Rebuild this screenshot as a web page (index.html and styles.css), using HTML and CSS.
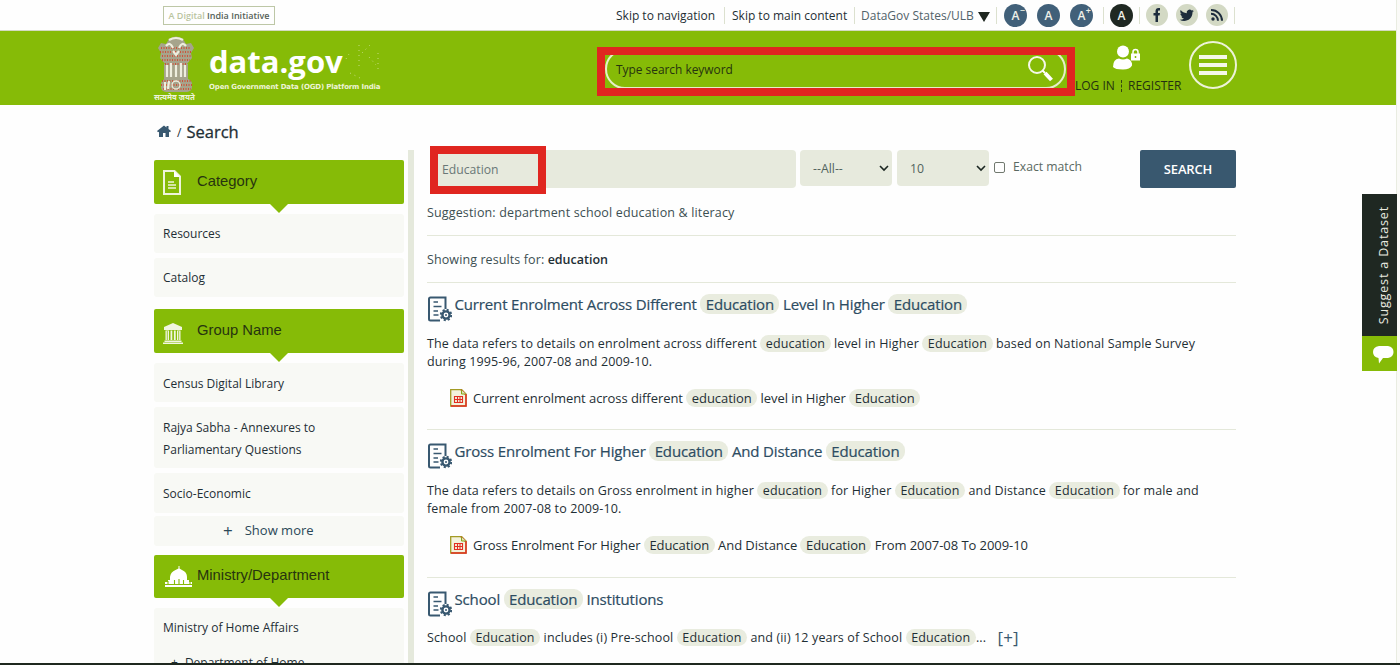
FILE: index.html
```html
<!DOCTYPE html>
<html lang="en">
<head>
<meta charset="utf-8">
<title>Search | data.gov</title>
<link rel="stylesheet" href="styles.css">
</head>
<body>
<svg class="defs" width="0" height="0">
  <symbol id="doc" viewBox="0 0 24 26"><path d="M17.500 13V1.500H2.500Q1 1.500 1 3v20q0 1.500 1.500 1.500H12" fill="none" stroke="#385870" stroke-width="2"/><path d="M5.500 6H10M5.500 10.500h8M5.500 15H10M5.500 19h5" stroke="#385870" stroke-width="1.700"/><circle cx="18" cy="19" r="3.600" fill="#fff" stroke="#385870" stroke-width="2.400"/><circle cx="18" cy="19" r="5.200" fill="none" stroke="#385870" stroke-width="2" stroke-dasharray="2.100 1.984"/><circle cx="18" cy="19" r="1" fill="#385870"/></symbol>
  <symbol id="xls" viewBox="0 0 17 18"><path d="M.7.7h11L16 5v12H.7z" fill="#f3f2dc" stroke="#a39b25" stroke-width="1.300"/><path d="M11 1l5 5M16 5v12H1" fill="none" stroke="#e22e22" stroke-width="1.500"/><path d="M11.500 1v4H16" fill="#d9e5b5" stroke="#88a51b"/><path d="M4 7.500h9M4 10.500h9M4 13.500h9M4.500 7v7M7.500 7v7M10 7v7M12.500 7v7" stroke="#e22e22" stroke-width="1.100"/></symbol>
</svg>
<div class="page">
  <div class="topbar">
    <div class="initiative"><span>A Digital</span> India Initiative</div>
    <nav class="toplinks">
      <a class="l1">Skip to navigation</a><i class="sep s1"></i><a class="l2">Skip to main content</a><i class="sep s2"></i><a class="l3">DataGov States/ULB</a><b class="tri"></b><i class="sep s3"></i>
      <span class="dot blue">A<sup>−</sup></span><span class="dot blue">A</span><span class="dot blue">A<sup>+</sup></span><i class="sep s4"></i>
      <span class="dot black">A</span><i class="sep s5"></i>
      <span class="dot soc"><svg width="22" height="22" viewBox="0 0 22 22"><path d="M9.500 18v-6.500H7.500V9h2V7.300C9.500 5.200 10.600 4 12.600 4H14v2.500h-1c-.8 0-1 .4-1 1V9h2l-.4 2.500H12V18z" fill="#1d2c3c"/></svg></span>
      <span class="dot soc"><svg width="22" height="22" viewBox="0 0 24 24"><path d="M19.500 7.500c-.6.300-1.200.4-1.800.5.600-.4 1.100-1 1.400-1.700-.6.400-1.300.6-2 .8A3.200 3.200 0 0 0 11.700 10C9 9.900 6.700 8.600 5.100 6.600c-.9 1.500-.4 3.300 1 4.200-.5 0-1-.2-1.400-.4 0 1.500 1.100 2.800 2.500 3.100-.5.100-1 .1-1.400.1.400 1.200 1.600 2.100 2.900 2.200A6.500 6.500 0 0 1 4 17.100c5.900 3.700 14-.1 14-8.100.6-.4 1.100-.9 1.500-1.500z" fill="#1d2c3c"/></svg></span>
      <span class="dot soc"><svg width="22" height="22" viewBox="0 0 22 22"><circle cx="7" cy="15" r="1.700" fill="#1d2c3c"/><path d="M5 9.800a7 7 0 0 1 7 7M5 6a10.800 10.800 0 0 1 11 10.800" fill="none" stroke="#1d2c3c" stroke-width="2"/></svg></span>
      <i class="sep s6"></i>
    </nav>
  </div>
  <header class="header">
    <div class="emblem">
      <svg width="38" height="58" viewBox="0 0 38 58"><g fill="#a6a48c"><path d="M12 3q7-5 14 0l3 5 5-1 3 5-3 5 1 5-5 6H8l-5-6 1-5-3-5 3-5 5 1z"/><rect x="7" y="28" width="24" height="15"/><rect x="4" y="43" width="31" height="13" rx="5"/></g><g fill="none" stroke="#d93a20" stroke-width="1.500" stroke-dasharray="1 1.500"><path d="M4 12h30M3 16h32M5 20h29M5 24h28M8 28h22M5 45h29M4 49h31M6 53h28"/></g><path d="M12 4q7-4 14 0M9 10q4-5 7 2M22 12q3-7 7-2M16 15l3 4 3-4M10 29v12M14 27v14M19 29v12M24 27v14M28 29v12M8 46v8M12 45l-1 8" stroke="#eeeede" stroke-width="2.200" fill="none"/><circle cx="19" cy="49" r="4" fill="none" stroke="#eeeede" stroke-width="1.300"/></svg>
      <span>सत्यमेव जयते</span>
    </div>
    <div class="brand"><div class="logo">data.gov<svg width="36" height="36" viewBox="0 0 36 36"><path d="M14 1v25M1 15l3-5M17 9l8-8M24 13l7 8M33 9v18M5 29l10 5" fill="none" stroke="#c5dc82" stroke-width="1" stroke-dasharray="1 4"/></svg></div><div class="tag">Open Government Data (OGD) Platform India</div></div>
    <div class="sitesearch"><span>Type search keyword</span>
      <svg width="28" height="28" viewBox="0 0 28 28"><circle cx="10" cy="10" r="8" fill="none" stroke="#f5f8e9" stroke-width="2"/><path d="M15.500 15.500L18 18" stroke="#fff" stroke-width="2"/><path d="M18 18l6.500 7" stroke="#fff" stroke-width="4"/></svg>
      <i class="mark wide"></i></div>
    <div class="account"><svg width="30" height="26" viewBox="0 0 30 26"><circle cx="12" cy="6.500" r="6" fill="#fff"/><path d="M2 22q0-8 6-8.500 4 2 8 0 4 1 5 5v2q-2 4-9 4-8 0-10-2.500z" fill="#fff"/><rect x="20" y="8.500" width="9" height="7" fill="#fff"/><path d="M22 9V7q0-2.500 2.500-2.500T27 7v2" fill="none" stroke="#fff" stroke-width="1.500"/><path d="M24.500 11v2" stroke="#86bb07" stroke-width="1.500"/></svg>
      <div class="login"><span class="li">LOG IN</span><i></i><span class="re">REGISTER</span></div></div>
    <div class="burger"><i></i><i></i><i></i></div>
  </header>
  <div class="crumb"><svg width="14" height="13" viewBox="0 0 14 13"><path d="M7 .5L0 6l1 1.200 1-.5V12h4V8h2.500v4H12V6.700l1 .5L14 6l-2.500-2V1h-2v1.500z" fill="#385870"/></svg><span class="slash">/</span><b>Search</b></div>
  <div class="cols">
    <aside class="side">
      <h3 class="cat"><svg width="18" height="25" viewBox="0 0 18 25"><path d="M1 1h10.500L17 6.500V24H1z" fill="none" stroke="#eef4da" stroke-width="2"/><path d="M11 1v6h6z" fill="#fff"/><path d="M5 12h6M5 15h8M5 18h8" stroke="#eef4da" stroke-width="1.300"/></svg><span>Category</span></h3>
      <ul><li>Resources</li><li>Catalog</li></ul>
      <h3 class="grp"><svg width="20" height="21" viewBox="0 0 20 21"><path d="M10 0L1 4v3h18V4zM2.500 7.500H6V17H2.500zm5 0h1.800V17H7.500zm3.400 0h1.800V17h-1.800zM14 7.500h3.500V17H14zM1.500 17.500h17V19h-17zM0 19.500h20V21H0z" fill="#f1f6e0"/><path d="M4.300 8v9M15.700 8v9" stroke="#86bb07" stroke-width=".8"/></svg><span>Group Name</span></h3>
      <ul class="g2"><li>Census Digital Library</li><li class="two">Rajya Sabha - Annexures to Parliamentary Questions</li><li class="soc-ec">Socio-Economic</li><li class="more"><em>+</em>Show more</li></ul>
      <h3 class="min"><svg width="28" height="22" viewBox="0 0 28 22"><path d="M13.500 0h1v2.500l2.500 1.500q5 2 5 7v3h2v2h3v5H0v-5h3v-2h2v-3q.5-5 5.500-7L13.500 2.500z" fill="#fff"/><path d="M9.500 18v-4M14 18v-5M18.500 18v-4M3 15v3M25 15v3M0 18.500h28" stroke="#86bb07" stroke-width="1.100"/></svg><span>Ministry/Department</span></h3>
      <ul><li class="home">Ministry of Home Affairs<div><em>+</em>Department of Home</div></li></ul>
    </aside>
    <main class="main">
      <div class="form"><div class="field"><span>Education</span><i class="mark small"></i></div>
        <div class="sel"><span>--All--</span><svg width="10" height="7" viewBox="0 0 10 7"><path d="M1 1l4 4 4-4" fill="none" stroke="#1c2722" stroke-width="1.600"/></svg></div>
        <div class="sel"><span>10</span><svg width="10" height="7" viewBox="0 0 10 7"><path d="M1 1l4 4 4-4" fill="none" stroke="#1c2722" stroke-width="1.600"/></svg></div>
        <i class="check"></i><span class="exact">Exact match</span><div class="btn">SEARCH</div></div>
      <div class="sug">Suggestion: department school education &amp; literacy</div>
      <div class="show">Showing results for: <b>education</b></div>
      <article><h2><svg width="24" height="26"><use href="#doc"/></svg><span>Current Enrolment Across Different <mark>Education</mark> Level In Higher <mark>Education</mark></span></h2>
        <p class="p1">The data refers to details on enrolment across different <mark>education</mark> level in Higher <mark>Education</mark> based on National Sample Survey<br>during 1995-96, 2007-08 and 2009-10.</p>
        <div class="file"><svg width="17" height="18"><use href="#xls"/></svg><span>Current enrolment across different <mark>education</mark> level in Higher <mark>Education</mark></span></div></article>
      <article><h2><svg width="24" height="26"><use href="#doc"/></svg><span>Gross Enrolment For Higher <mark>Education</mark> And Distance <mark>Education</mark></span></h2>
        <p class="p1">The data refers to details on Gross enrolment in higher <mark>education</mark> for Higher <mark>Education</mark> and Distance <mark>Education</mark> for male and<br>female from 2007-08 to 2009-10.</p>
        <div class="file"><svg width="17" height="18"><use href="#xls"/></svg><span>Gross Enrolment For Higher <mark>Education</mark> And Distance <mark>Education</mark> From 2007-08 To 2009-10</span></div></article>
      <article><h2><svg width="24" height="26"><use href="#doc"/></svg><span>School <mark>Education</mark> Institutions</span></h2>
        <p class="p1">School <mark>Education</mark> includes (i) Pre-school <mark>Education</mark> and (ii) 12 years of School <mark>Education</mark>... <span class="plus">[+]</span></p></article>
    </main>
  </div>
  <div class="suggest"><div class="st"><span>Suggest a Dataset</span></div><div class="chat"><svg width="21" height="18" viewBox="0 0 21 18"><path d="M6 0h9q5.500 1 5.500 6T15 12h-5l-4 5.500L5.500 12Q0 11 0 6t6-6z" fill="#fff"/></svg></div></div>
</div>
</body>
</html>
```
FILE: styles.css
```css
* { box-sizing: border-box; }
body { margin: 0; font-family: "Open Sans", "Noto Sans", sans-serif; color: #1f2f35; background: #fefefe; }
h2, h3, p, ul { margin: 0; padding: 0; font-weight: 400; }
li { list-style: none; }
i, em { font-style: normal; }
svg { display: block; flex: none; }
.defs { position: absolute; }
.page { position: relative; width: 1400px; height: 665px; overflow: hidden; border-bottom: 2px solid #1f281f; }
.page::after { content: ""; position: absolute; right: 0; top: 0; width: 3px; height: 665px; border-left: 1px solid #e9ece1; background: #fafaf7; }

.topbar { height: 31px; display: flex; align-items: center; padding-left: 163px; border-bottom: 1px solid #d3dac1; }
.initiative { width: 112px; height: 19px; margin-top: 1px; border: 1px solid #bdc7a6; font: 600 9px/17px "Open Sans", sans-serif; color: #556158; text-align: center; white-space: nowrap; }
.initiative span { color: #bac5a0; }
.toplinks { display: flex; align-items: center; height: 31px; margin-left: 341px; font-size: 12px; white-space: nowrap; }
.toplinks > * { flex: none; }
.l1 { width: 108px; }
.l2 { width: 122px; margin-left: 7px; }
.l3 { width: 117px; margin-left: 6px; color: #52636a; }
.sep { width: 1px; height: 17px; background: #dce1cf; }
.tri { border: 6px solid transparent; border-top: 10px solid #1f2720; border-bottom: 0; margin-top: 3px; }
.s3 { margin: 0 7px 0 6px; }
.s4 { margin-right: 6px; margin-left: 0; }
.s5 { margin: 0 6px 0 6px; }
.dot { position: relative; width: 23px; height: 23px; border-radius: 50%; color: #eef0e8; font: 600 12px/23px "Open Sans", sans-serif; text-align: center; }
.dot sup { position: absolute; top: -5px; right: 2px; font-size: 9px; }
.blue { background: #416079; margin-right: 10px; }
.black { background: #1f2822; }
.soc { width: 22px; height: 22px; background: #d3d9c4; margin-right: 8px; }
.s6 { margin-left: -2px; }

.header { height: 74px; background: #86bb07; display: flex; padding-left: 154px; }
.header > * { flex: none; }
.emblem { width: 43px; padding: 5px 0 0 3px; }
.emblem span { display: block; margin: -1px 0 0 -3px; font: 700 7.800px/9px "Noto Sans", sans-serif; color: #eef3dc; white-space: nowrap; }
.brand { width: 389px; padding: 13px 0 0 12px; color: #fff; }
.logo { display: flex; height: 36px; font: 700 31px/34px "Open Sans", sans-serif; letter-spacing: 0; }
.logo svg { margin-left: 2px; }
.tag { font: 700 7px/10px "DejaVu Sans", sans-serif; letter-spacing: -.16px; color: #edf4d6; white-space: nowrap; margin-top: 2px; }
.sitesearch { position: relative; width: 461px; height: 40px; margin: 18px 0 0 19px; border: 2px solid #e7efc9; border-radius: 20px; display: flex; align-items: center; justify-content: space-between; padding: 0 9px 0 9px; font-size: 11.900px; color: #27340f; }
.mark { position: absolute; border: 8px solid #e02620; }
.wide { left: -10px; top: -4px; width: 478px; height: 49px; }
.account { width: 108px; padding: 14px 0 0 9px; color: #243110; }
.account > svg { margin-left: 36px; }
.login { display: flex; align-items: center; margin-top: 6px; height: 17px; font-size: 12px; white-space: nowrap; }
.login > * { flex: none; }
.li { width: 46px; }
.login i { width: 1px; height: 12px; border-left: 1px dashed #354811; margin-right: 6px; }
.burger { width: 48px; height: 48px; margin: 10px 0 0 15px; border: 2px solid #edf3d8; border-radius: 50%; display: flex; flex-direction: column; align-items: center; justify-content: center; gap: 4px; }
.burger i { width: 28px; height: 4px; background: #f5f8e9; }

.crumb { display: flex; align-items: center; height: 45px; padding: 8px 0 0 157px; font-size: 12px; }
.crumb b { font-size: 16.500px; font-weight: 400; -webkit-text-stroke: .3px #1f2f35; }
.slash { margin: 2px 5px 0 6px; }
.cols { display: flex; padding-left: 154px; height: 515px; }
.side { width: 260px; height: 515px; border-right: 6px solid #e5e9dc; padding: 10px 4px 0 0; font-size: 12px; line-height: 22px; }
.side h3 { position: relative; height: 44px; background: #86bb07; border-radius: 2px; display: flex; align-items: center; padding-left: 9px; font: 14.800px/20px "Liberation Sans", Arial, sans-serif; color: #27340f; }
.side h3 span { position: relative; width: 200px; margin: -3px 0 0 16px; }
.side .grp span { margin-left: 14px; }
.side .grp svg { margin-top: 4px; }
.side .min { padding-left: 11px; }
.side .min span { margin-left: 4px; }
.side h3::after { content: ""; position: absolute; left: 116px; top: 44px; border: 9px solid transparent; border-top-color: #86bb07; border-bottom: 0; }
.side ul { padding-top: 10px; margin-bottom: 12px; }
.side li { height: 39px; background: #f8f9f5; padding: 9px 30px 0 9px; margin-bottom: 5px; border-radius: 3px; white-space: nowrap; }
.side .two { height: 61px; white-space: normal; padding-right: 60px; }
.side li:last-child { margin-bottom: 0; }
.side .soc-ec { margin-bottom: 3px; height: 40px; }
.side .more { height: 30px; padding: 3px 0 0 69px; font-size: 13px; color: #2b4858; }
.more em { font-size: 17px; margin-right: 12px; vertical-align: -2px; line-height: 20px; }
.side .g2 { margin-bottom: 9px; }
.side .g2 li:not(.more) { padding-top: 10px; }
.side .min { height: 43px; }
.side .min::after { top: 43px; }
.side .home { height: 90px; }
.home div { padding: 13px 0 0 8px; }
.home em { margin-right: 7px; }

.main { width: 809px; margin-left: 13px; font-size: 13px; }
.form { display: flex; height: 63px; align-items: flex-start; margin-left: 3px; }
.field { position: relative; width: 366px; height: 38px; background: #e7eadd; border-radius: 4px; padding-left: 12px; line-height: 39px; font-size: 12.200px; color: #6a7877; margin-right: 4px; }
.small { left: 0; top: -4px; width: 116px; height: 48px; }
.sel { width: 92px; height: 36px; margin-right: 5px; border-radius: 4px; background: #e7eadd; display: flex; justify-content: space-between; align-items: center; padding: 0 3px 0 13px; color: #52645e; font-size: 12.300px; }
.check { width: 11px; height: 11px; border: 1px solid #71796f; border-radius: 2px; margin-top: 12px; }
.exact { width: 127px; margin: 8px 0 0 8px; font-size: 12.200px; color: #5a6962; white-space: nowrap; }
.btn { width: 96px; height: 38px; background: #39586f; color: #fff; border-radius: 2px; text-align: center; font: 600 13px/38px "Open Sans", sans-serif; letter-spacing: -.15px; }
.sug { height: 23px; line-height: 0; border-bottom: 1px solid #e4e8da; font-size: 12.500px; letter-spacing: .15px; color: #3c4f52; }
.show { height: 47px; line-height: 48px; font-size: 12.500px; letter-spacing: .1px; border-bottom: 1px solid #e4e8da; color: #3c4f52; }
.show b { color: #1f2f35; font-weight: 600; letter-spacing: 0; }
article { height: 147.300px; border-bottom: 1px solid #e4e8da; white-space: nowrap; }
article:last-child { border: 0; }
article h2 { display: flex; height: 50px; padding: 13px 0 0 1px; font-size: 15px; letter-spacing: -.15px; line-height: 17px; color: #2d4c62; -webkit-text-stroke: .2px #2d4c62; }
article h2 svg { margin-right: 2.500px; }
article h2 span { display: block; height: 20px; }
mark { color: inherit; background: #e9ecdf; border-radius: 9px; padding: 0 5.600px; }
h2 mark { padding: 0 5.300px; }
article p { line-height: 18.500px; font-size: 12.500px; letter-spacing: .13px; padding-top: 1.500px; }
.file { display: flex; align-items: center; margin-top: 16.500px; padding-left: 23px; line-height: 21px; letter-spacing: -.06px; }
.file svg { margin: -2px 6px 0 0; }
.plus { font-size: 17px; color: #39586f; margin-left: 8px; line-height: 18px; vertical-align: -2px; }

.suggest { position: absolute; left: 1362px; top: 194px; width: 35px; height: 178px; z-index: 2; }
.st { height: 142px; background: #1f2822; display: flex; align-items: center; justify-content: center; padding-left: 8px; }
.st span { writing-mode: vertical-rl; transform: rotate(180deg); color: #e9ebe0; font-size: 12.500px; letter-spacing: .85px; white-space: nowrap; }
.chat { height: 35px; background: #86bb07; padding: 10px 0 0 11px; }
```
